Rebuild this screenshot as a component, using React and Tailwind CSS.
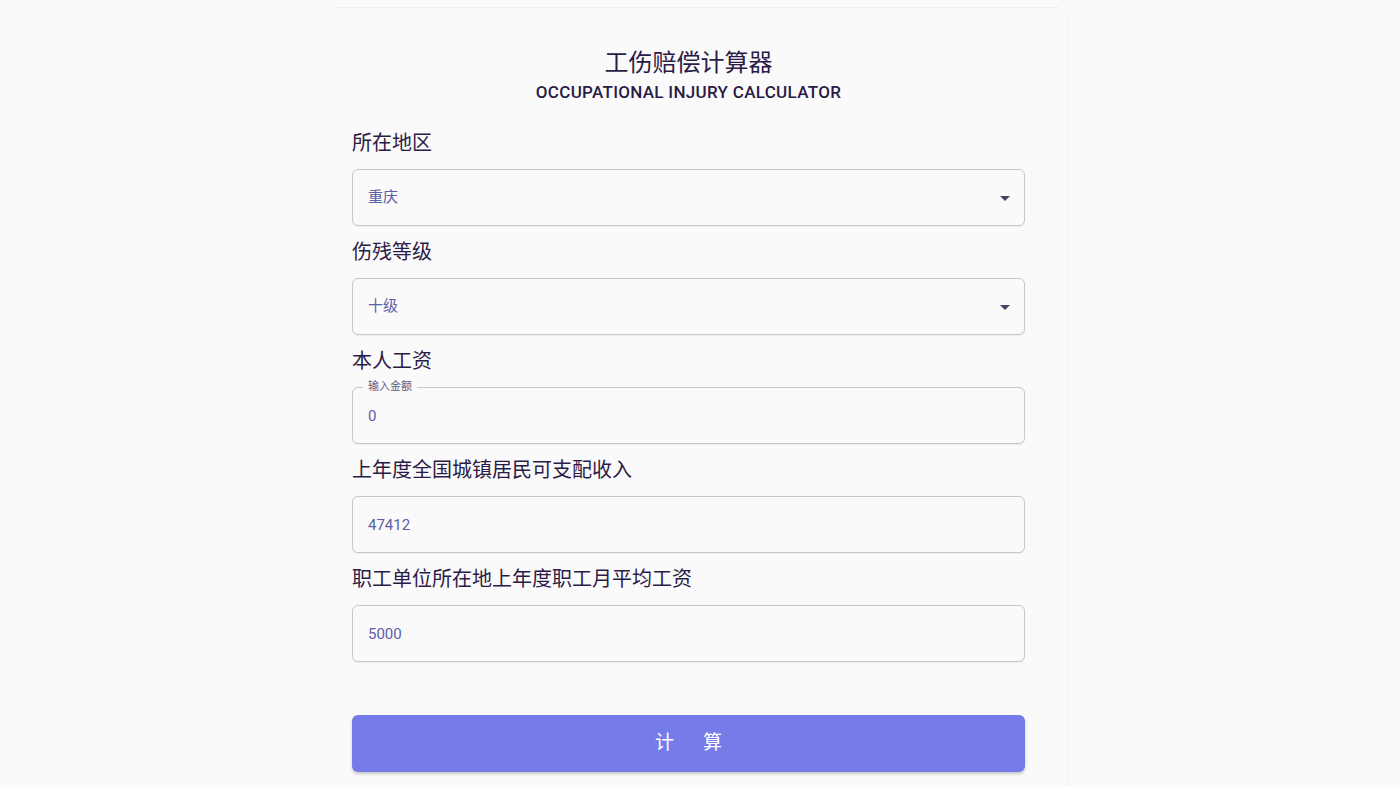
import { useState } from 'react';

const FONT = { fontFamily: 'Roboto, "Noto Sans CJK SC", sans-serif' };

function SelectField({ label, value }) {
  return (
    <div className="flex flex-col gap-3">
      <span className="text-[20px] leading-[28px] text-[#2b1b47]">{label}</span>
      <div className="relative flex h-[57px] items-center rounded-[6px] border border-[#c8c8c8] bg-[#fafafa] pl-[15px] shadow-[0_1px_1px_rgba(0,0,0,0.06)]">
        <span className="text-[15px] text-[#5b5ea6]">{value}</span>
        <svg className="absolute right-[14px] top-[26px]" width="10" height="5" viewBox="0 0 10 5">
          <path d="M0 0 L10 0 L5 5 Z" fill="#4d3f66" />
        </svg>
      </div>
    </div>
  );
}

function InputField({ label, value, floating }) {
  const [val, setVal] = useState(value);
  return (
    <div className="flex flex-col gap-3">
      <span className="text-[20px] leading-[28px] text-[#2b1b47]">{label}</span>
      <div className="relative h-[57px] rounded-[6px] border border-[#c8c8c8] bg-[#fafafa] shadow-[0_1px_1px_rgba(0,0,0,0.06)]">
        {floating ? (
          <span className="absolute left-[10px] -top-[9px] bg-[#fafafa] px-[5px] text-[11px] leading-[16px] text-[#5f5f8a]">
            {floating}
          </span>
        ) : null}
        <input
          value={val}
          onChange={(e) => setVal(e.target.value)}
          className="h-full w-full bg-transparent pl-[15px] text-[15px] text-[#5b5ea6] outline-none"
          style={FONT}
        />
      </div>
    </div>
  );
}

export default function App() {
  return (
    <div className="min-h-screen bg-[#fafafa]" style={FONT}>
      <div className="mx-auto w-[736px] pt-[7px]">
        <div className="mx-[4px] mr-[9px] h-px bg-[#f0f0e6]" />
        <div className="mt-[6px] border-r border-[#f1f1e8] pb-4 pl-[20px] pr-[42px] pt-[33px]">
          <div className="flex flex-col items-center">
            <h1 className="text-[24px] leading-[32px] text-[#2b1b47]">工伤赔偿计算器</h1>
            <p className="mt-[1px] text-[17px] font-medium leading-[24px] tracking-[0.3px] text-[#2b1b47]">
              OCCUPATIONAL INJURY CALCULATOR
            </p>
          </div>

          <div className="mt-[25px] flex flex-col gap-3">
            <SelectField label="所在地区" value="重庆" />
            <SelectField label="伤残等级" value="十级" />
            <InputField label="本人工资" value="0" floating="输入金额" />
            <InputField label="上年度全国城镇居民可支配收入" value="47412" />
            <InputField label="职工单位所在地上年度职工月平均工资" value="5000" />
          </div>

          <button
            type="button"
            className="mt-[53px] h-[57px] w-full rounded-[6px] bg-[#757ce9] text-[19px] text-white shadow-[0_2px_3px_rgba(0,0,0,0.2)]"
          >
            计<span className="inline-block w-[29px]" />算
          </button>
        </div>
      </div>
    </div>
  );
}
